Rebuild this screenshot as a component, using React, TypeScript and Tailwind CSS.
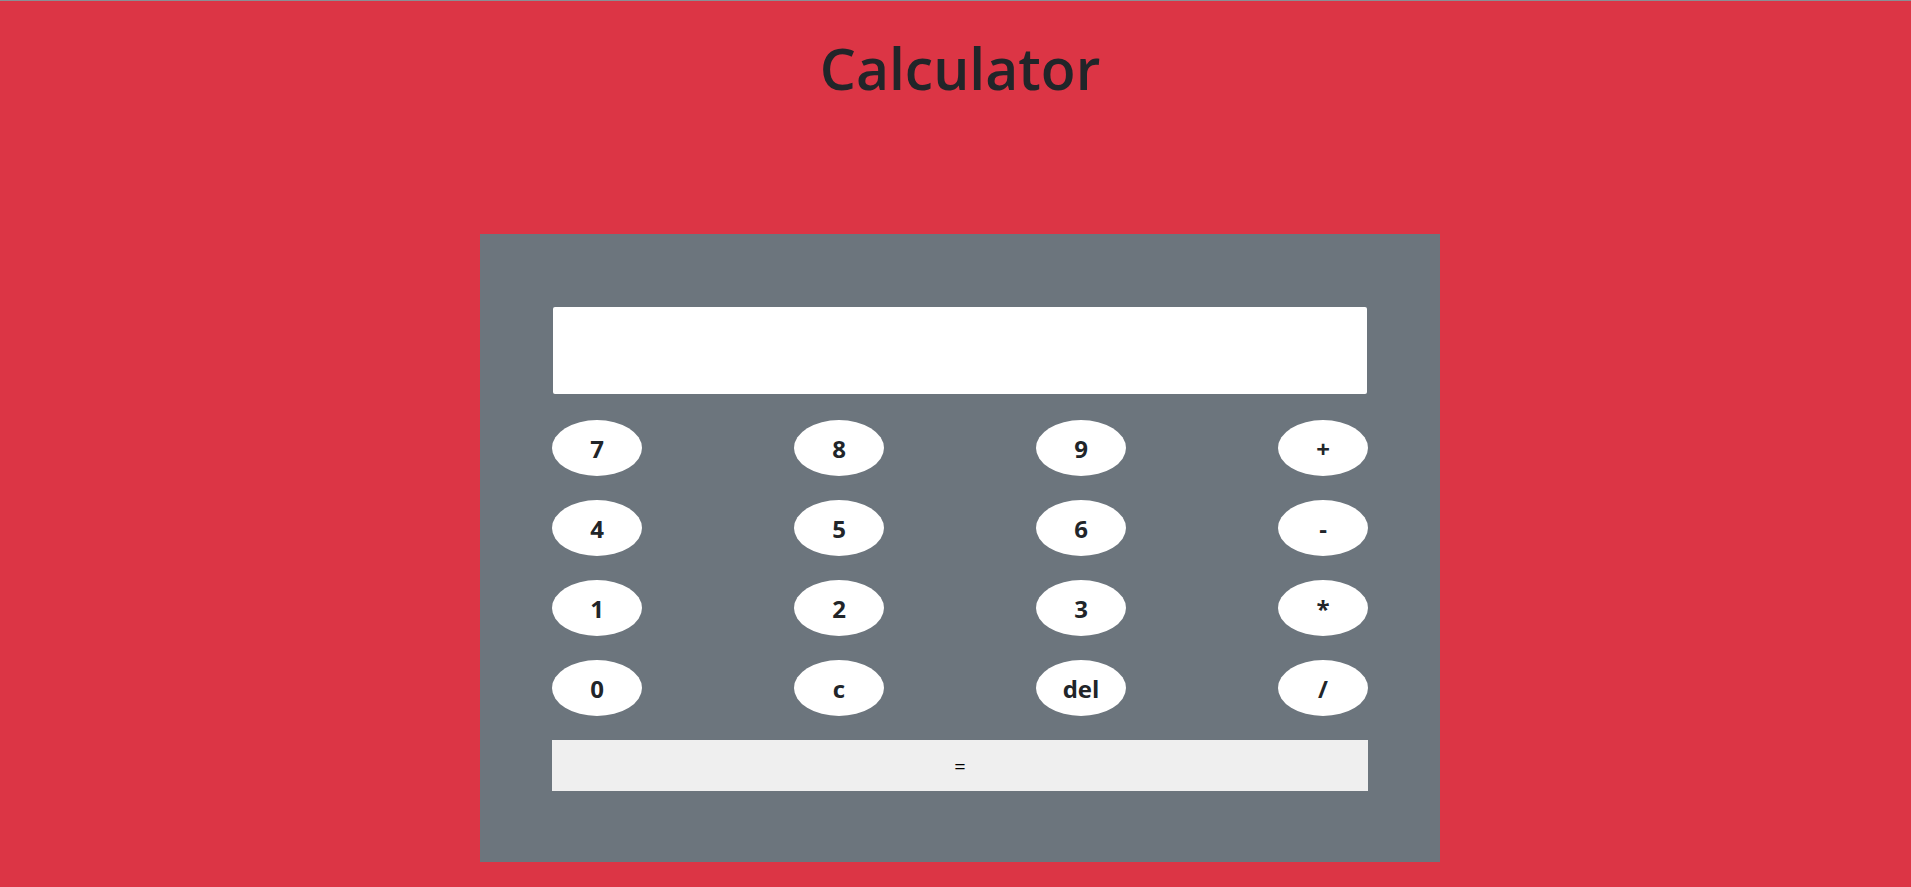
import React, { useState } from "react";

const rows: string[][] = [
  ["7", "8", "9", "+"],
  ["4", "5", "6", "-"],
  ["1", "2", "3", "*"],
  ["0", "c", "del", "/"],
];

const App: React.FC = () => {
  const [value, setValue] = useState("");

  const press = (key: string) => {
    if (key === "c") return setValue("");
    if (key === "del") return setValue((v) => v.slice(0, -1));
    setValue((v) => v + key);
  };

  const evaluate = () => {
    try {
      // eslint-disable-next-line no-new-func
      setValue(String(Function(`"use strict";return (${value || "0"})`)()));
    } catch {
      setValue("Error");
    }
  };

  return (
    <div className="min-h-[887px] bg-[#dc3545] border-t border-[#8a8f94] pl-[9px] font-['Open_Sans','Noto_Sans',sans-serif] text-[#212529]">
      <h1 className="pt-[33px] text-center text-[57px] leading-[68px] font-semibold">
        Calculator
      </h1>
      <div className="mx-auto mt-[132px] w-[960px] bg-[#6c757d] p-[72px] pb-[71px]">
        <input
          type="text"
          value={value}
          readOnly
          className="m-px block h-[87px] w-[814px] rounded-[2px] bg-white px-3 text-3xl outline-none"
        />
        <div className="mt-[26px] flex flex-col gap-6">
          {rows.map((row, i) => (
            <div key={i} className="flex justify-between">
              {row.map((key) => (
                <button
                  key={key}
                  onClick={() => press(key)}
                  className="h-14 w-[90px] rounded-[50%] bg-white pt-0.5 text-2xl font-bold text-[#212529]"
                >
                  {key}
                </button>
              ))}
            </div>
          ))}
        </div>
        <button
          onClick={evaluate}
          className="mt-6 block h-[51px] w-full bg-[#efefef] pt-0.5 font-['Open_Sans',sans-serif] text-[20px] text-black"
        >
          =
        </button>
      </div>
    </div>
  );
};

export default App;
